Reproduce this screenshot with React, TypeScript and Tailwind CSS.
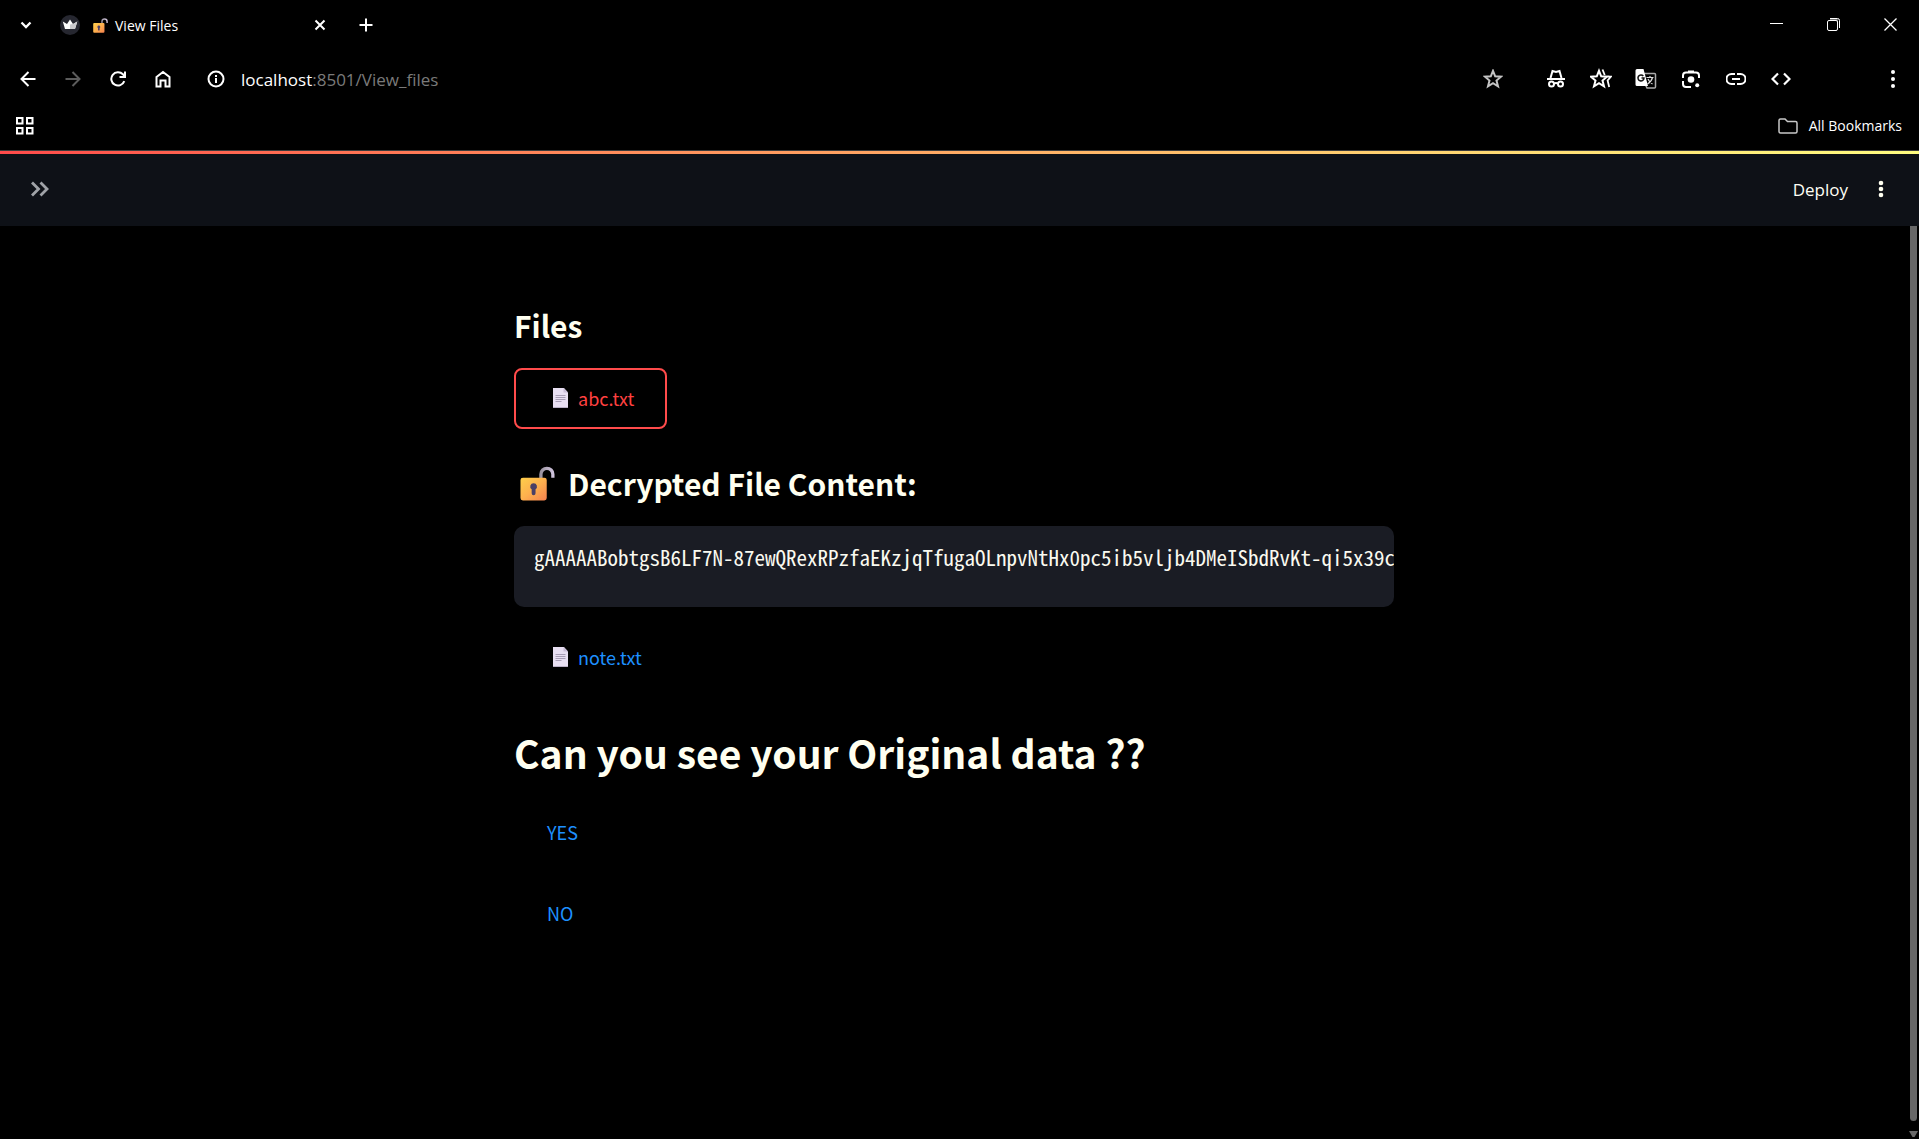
import type { ReactNode } from "react";

const uiFont = "font-['Open_Sans','Noto_Sans',sans-serif]";
const bodyFont = "font-['Noto_Sans_CJK_SC','Noto_Sans',sans-serif]";
const codeFont = "font-['Noto_Sans_Mono_CJK_SC','DejaVu_Sans_Mono',monospace]";

const CODE =
  "gAAAAABobtgsB6LF7N-87ewQRexRPzfaEKzjqTfugaOLnpvNtHx0pc5ib5vljb4DMeISbdRvKt-qi5x39c";

function IconButton({
  label,
  className,
  children,
}: {
  label: string;
  className: string;
  children: ReactNode;
}) {
  return (
    <button
      type="button"
      aria-label={label}
      className={`flex shrink-0 items-center justify-center ${className}`}
    >
      {children}
    </button>
  );
}

function Glyph({
  size = 20,
  width = 2,
  children,
}: {
  size?: number;
  width?: number;
  children: ReactNode;
}) {
  return (
    <svg
      width={size}
      height={size}
      viewBox={`0 0 ${size} ${size}`}
      fill="none"
      stroke="currentColor"
      strokeWidth={width}
      aria-hidden="true"
    >
      {children}
    </svg>
  );
}

function OpenLock({ className }: { className: string }) {
  return (
    <svg viewBox="0 0 36 36" className={className} aria-hidden="true">
      <defs>
        <linearGradient id="lockBody" x1="0" y1="0" x2="1" y2="1">
          <stop offset="0" stopColor="#ffcf4a" />
          <stop offset="0.5" stopColor="#fdb04e" />
          <stop offset="1" stopColor="#f5804f" />
        </linearGradient>
        <linearGradient id="lockShackle" x1="0" y1="0" x2="1" y2="0">
          <stop offset="0" stopColor="#9a929f" />
          <stop offset="1" stopColor="#cfc3dc" />
        </linearGradient>
      </defs>
      <path
        d="M21.5 13V8.5a6 6 0 0 1 12.3 0V12"
        fill="none"
        stroke="url(#lockShackle)"
        strokeWidth="3.4"
      />
      <rect x="0.5" y="12" width="27" height="23.5" rx="2.5" fill="url(#lockBody)" />
      <path
        d="M14 17.8a3.4 3.4 0 0 1 2 6.2v4a2 2 0 0 1-4 0v-4a3.4 3.4 0 0 1 2-6.2z"
        fill="#4b3f66"
      />
    </svg>
  );
}

function PageIcon() {
  return (
    <svg width="15" height="20" viewBox="0 0 15 20" aria-hidden="true">
      <path d="M0 0h11l4 4.500v15.500H0z" fill="#e8dff2" />
      <path d="M10.500 0v4.500H15z" fill="#c9bdd8" />
      <path d="M2.500 7.500h10M2.500 9.500h10M2.500 11.500h10M2.500 13.500h6" stroke="#a79db5" />
      <path d="M0 19.500h15" stroke="#b9afc6" />
    </svg>
  );
}

function TabStrip() {
  return (
    <div className="flex h-[50px] items-center">
      <IconButton label="Search tabs" className="h-10 w-[52px]">
        <Glyph size={14}>
          <path d="M2.500 4.500 7 9l4.500-4.500" strokeWidth="2.300" />
        </Glyph>
      </IconButton>
      <div className="flex w-[282px] items-center pl-2">
        <svg width="20" height="20" viewBox="0 0 20 20" className="shrink-0" aria-hidden="true">
          <circle cx="10" cy="10" r="10" fill="#262730" />
          <path d="M2.800 6.500 7 9l3-4.500L13 9l4.300-2.500-2.300 7.500H5z" fill="#fff" />
          <path d="M10 9.500 13 9l4.300-2.500L15 14h-5z" fill="#c9c9cc" />
        </svg>
        <OpenLock className="ml-[13px] size-[15px] shrink-0" />
        <span className={`ml-[7px] flex-1 pt-0.5 text-[14px] leading-5 ${uiFont}`}>View Files</span>
        <IconButton label="Close tab" className="size-7">
          <Glyph size={12}>
            <path d="M1.500 1.500l9 9M10.500 1.500l-9 9" />
          </Glyph>
        </IconButton>
      </div>
      <IconButton label="New tab" className="ml-4 size-8">
        <Glyph size={14}>
          <path d="M7 .5v13M.5 7h13" />
        </Glyph>
      </IconButton>
      <div className="ml-auto flex h-full">
        <IconButton label="Minimize" className="h-[47px] w-[57px]">
          <Glyph size={13} width={1}>
            <path d="M0 6.500h13" />
          </Glyph>
        </IconButton>
        <IconButton label="Restore" className="h-[49px] w-[57px]">
          <Glyph size={13} width={1}>
            <path d="M3 1.500h7.500v8.500" stroke="#777" strokeWidth="1" />
            <path d="M.5 4q0-1.500 1.500-1.500h7q1.500 0 1.500 1.500v7q0 1.500-1.500 1.500H2q-1.500 0-1.500-1.500z" />
            <path d="M3 .5h7.500q2 0 2 2V10" />
          </Glyph>
        </IconButton>
        <IconButton label="Close" className="h-[49px] w-[57px]">
          <Glyph size={13} width={1}>
            <path d="M.5.5l12 12M12.500.5l-12 12" strokeWidth="1.300" />
          </Glyph>
        </IconButton>
      </div>
    </div>
  );
}

const star =
  "M10 1.800 12.200 7.300 18 7.700 13.500 11.500 15 17.300 10 14.100 5 17.300 6.500 11.500 2 7.700 7.800 7.300z";

function Toolbar() {
  return (
    <div className="flex h-[58px] items-center pl-[5px]">
      <IconButton label="Back" className="h-10 w-[45px]">
        <Glyph size={16}>
          <path d="M15.500 8H2M8.500 1 1.500 8l7 7" />
        </Glyph>
      </IconButton>
      <IconButton label="Forward" className="h-10 w-[45px] text-[#5c5c5c]">
        <Glyph size={16}>
          <path d="M.5 8H14M7.500 1l7 7-7 7" />
        </Glyph>
      </IconButton>
      <IconButton label="Reload" className="h-10 w-[45px]">
        <Glyph size={16}>
          <path d="M14.300 10.200A6.700 6.700 0 1 1 12.900 3.300L14.500 5" />
          <path d="M15 .5v5.500H9.500" />
        </Glyph>
      </IconButton>
      <IconButton label="Home" className="h-10 w-[45px]">
        <Glyph size={18}>
          <path d="M2.500 7 9 2l6.500 5v9.500h-4v-6h-5v6h-4z" />
        </Glyph>
      </IconButton>
      <IconButton label="View site information" className="ml-[11px] h-10 w-10">
        <Glyph size={18}>
          <circle cx="9" cy="9" r="7.500" />
          <path d="M9 8v5M9 5v2" />
        </Glyph>
      </IconButton>
      <span className={`ml-[5px] pt-0.5 text-[17px] leading-6 ${uiFont}`}>
        localhost<span className="text-[#7a7a7a]">:8501/View_files</span>
      </span>

      <div className="ml-auto flex items-center">
        <IconButton label="Bookmark this tab" className="mr-[18px] h-10 w-[45px] text-[#c4c4c4]">
          <Glyph size={20}>
            <path d={star} />
          </Glyph>
        </IconButton>
        <IconButton label="Incognito" className="h-10 w-[45px]">
          <Glyph size={20}>
            <path d="M1 10h18" />
            <path d="M4.500 9 6.500 2 10 3l3.500-1 2 7" />
            <circle cx="5.500" cy="15" r="2.500" />
            <circle cx="14.500" cy="15" r="2.500" />
            <path d="M8 14.500q2-1 4 0" />
          </Glyph>
        </IconButton>
        <IconButton label="Bookmarks" className="h-10 w-[45px]">
          <Glyph size={22}>
            <path d={star} transform="translate(-1 1)" />
            <path d="M12.500 1.500 14.700 7" strokeWidth="1.800" />
            <path d="M17.500 8.600h3.500L17.600 12.400 19.200 19" strokeWidth="1.800" />
          </Glyph>
        </IconButton>
        <IconButton label="Translate this page" className="h-10 w-[45px]">
          <svg width="22" height="22" viewBox="0 0 22 22" fill="none" aria-hidden="true">
            <path d="M9 5.500h10.500a1 1 0 0 1 1 1V19a1 1 0 0 1-1 1H12l-2-4" stroke="#aaa" strokeWidth="1.500" />
            <path d="M2 1h6.500l4.500 17H2a1.500 1.500 0 0 1-1.500-1.500v-14A1.500 1.500 0 0 1 2 1z" fill="#fff" />
            <path d="M8.300 8A3 3 0 1 0 9 10H6.500" stroke="#111" strokeWidth="1.500" />
            <path d="M11.500 9.500h7M15 8v1.500M17.500 9.500q-1 4-5 6.500M13 11q1.500 3.500 4.500 5" stroke="#ddd" strokeWidth="1.200" />
          </svg>
        </IconButton>
        <IconButton label="Search with Lens" className="h-10 w-[45px]">
          <Glyph size={20}>
            <path d="M2 9V6.500a3 3 0 0 1 3-3h10a3 3 0 0 1 3 3V9M2 12v3a3 3 0 0 0 3 3h5" />
            <path d="M7 2.500h6" />
            <circle cx="10" cy="10.500" r="3.300" fill="currentColor" stroke="none" />
            <circle cx="16.200" cy="16.200" r="2" fill="currentColor" stroke="none" />
          </Glyph>
        </IconButton>
        <IconButton label="Copy link" className="h-10 w-[45px]">
          <Glyph size={20}>
            <path d="M9 5H5.500a5 5 0 0 0 0 10H9M11 5h3.500a5 5 0 0 1 0 10H11M6 10h8" />
          </Glyph>
        </IconButton>
        <IconButton label="Developer tools" className="h-10 w-[45px]">
          <Glyph size={20}>
            <path d="M7 4.500 1.500 10 7 15.500M13 4.500l5.500 5.500-5.500 5.500" strokeWidth="2.200" />
          </Glyph>
        </IconButton>
        <IconButton label="Browser menu" className="ml-[70px] mr-[6px] h-10 w-10">
          <svg width="6" height="20" viewBox="0 0 6 20" fill="currentColor" aria-hidden="true">
            <circle cx="3" cy="3" r="2" />
            <circle cx="3" cy="10" r="2" />
            <circle cx="3" cy="17" r="2" />
          </svg>
        </IconButton>
      </div>
    </div>
  );
}

function BookmarksBar() {
  return (
    <div className="flex h-[43px] items-center justify-between border-b border-[#3c3c3c] pb-[7px] pl-[15px] pr-[17px]">
      <IconButton label="Tab groups" className="size-5">
        <Glyph size={20}>
          <path d="M2 2h5.500v5.500H2zM12 2h5.500v5.500H12zM2 12h5.500v5.500H2zM12 12h5.500v5.500H12z" />
        </Glyph>
      </IconButton>
      <button type="button" className={`flex items-center gap-[11px] text-[14px] leading-5 ${uiFont}`}>
        <svg width="20" height="16" viewBox="0 0 20 16" fill="none" stroke="#c8c8c8" strokeWidth="1.500" aria-hidden="true">
          <path d="M1 2.500Q1 1 2.500 1H7l2.500 2.500h8Q19 3.500 19 5v8.500q0 1.500-1.500 1.500h-15Q1 15 1 13.500z" />
        </svg>
        All Bookmarks
      </button>
    </div>
  );
}

function AppHeader() {
  return (
    <header className="bg-[#0e1117]">
      <div className="h-[3px] bg-linear-to-r from-[#ff4b4b] to-[#fffd80]" />
      <div className="flex h-[72px] items-center pb-[3px]">
        <IconButton label="Open sidebar" className="ml-5 size-10 text-[#a0a3a8]">
          <Glyph size={20}>
            <path d="M2 3.500 8.500 10 2 16.500M10.500 3.500 17 10l-6.500 6.500" strokeWidth="2.800" />
          </Glyph>
        </IconButton>
        <button
          type="button"
          className={`ml-auto pt-0.5 text-[17px] leading-6 text-[#fffff5] ${uiFont}`}
        >
          Deploy
        </button>
        <IconButton label="App menu" className="ml-[13px] mr-[18px] size-10 text-[#fffff0]">
          <svg width="6" height="18" viewBox="0 0 6 18" fill="currentColor" aria-hidden="true">
            <circle cx="3" cy="3" r="2.300" />
            <circle cx="3" cy="9" r="2.300" />
            <circle cx="3" cy="15" r="2.300" />
          </svg>
        </IconButton>
      </div>
    </header>
  );
}

function ActionButton({
  page = false,
  active = false,
  children,
}: {
  page?: boolean;
  active?: boolean;
  children: ReactNode;
}) {
  return (
    <button
      type="button"
      className={`flex items-center rounded-lg border-2 px-[31px] pb-4 pt-[15px] text-[18px] leading-[26px] ${
        active ? "border-[#ff4b4b] text-[#ff4040]" : "border-transparent text-[#1e90ff]"
      }`}
    >
      {page && (
        <span className="ml-1.5 mr-2.5">
          <PageIcon />
        </span>
      )}
      {children}
    </button>
  );
}

const h3 = "flex items-center pt-3 text-[30px] leading-[45px] font-bold text-[#fffff0]";

export default function App() {
  return (
    <div className="flex min-h-screen flex-col bg-black text-white">
      <TabStrip />
      <Toolbar />
      <BookmarksBar />
      <AppHeader />
      <div className="flex flex-1">
        <main className={`flex-1 pt-[65px] ${bodyFont}`}>
          <div className="mx-auto flex max-w-[880px] flex-col items-start gap-5">
            <h3 className={h3}>Files</h3>
            <ActionButton page active>
              abc.txt
            </ActionButton>
            <h3 className={h3}>
              <OpenLock className="ml-1.5 mr-[13px] size-[35px]" />
              Decrypted File Content:
            </h3>
            <pre
              className={`w-full overflow-hidden rounded-[10px] bg-[#1a1c24] pb-[39px] pl-5 pt-5 text-[21px] leading-[22px] text-[#fafaf0] ${codeFont}`}
            >
              <code className={codeFont}>{CODE}</code>
            </pre>
            <ActionButton page>note.txt</ActionButton>
            <h1 className="pt-3.5 text-[39px] leading-[60px] font-bold text-[#fffff0]">
              Can you see your Original data ??
            </h1>
            <ActionButton>YES</ActionButton>
            <ActionButton>NO</ActionButton>
          </div>
        </main>
        <div className="flex w-[11px] flex-col px-0.5 pb-0.5" aria-hidden="true">
          <div className="w-[7px] flex-1 rounded-b-full bg-[#686868]" />
          <svg width="9" height="6" viewBox="0 0 9 6" className="-ml-px mt-2.5" fill="#686868">
            <path d="M0 0h9L5.500 6h-2z" />
          </svg>
        </div>
      </div>
    </div>
  );
}
